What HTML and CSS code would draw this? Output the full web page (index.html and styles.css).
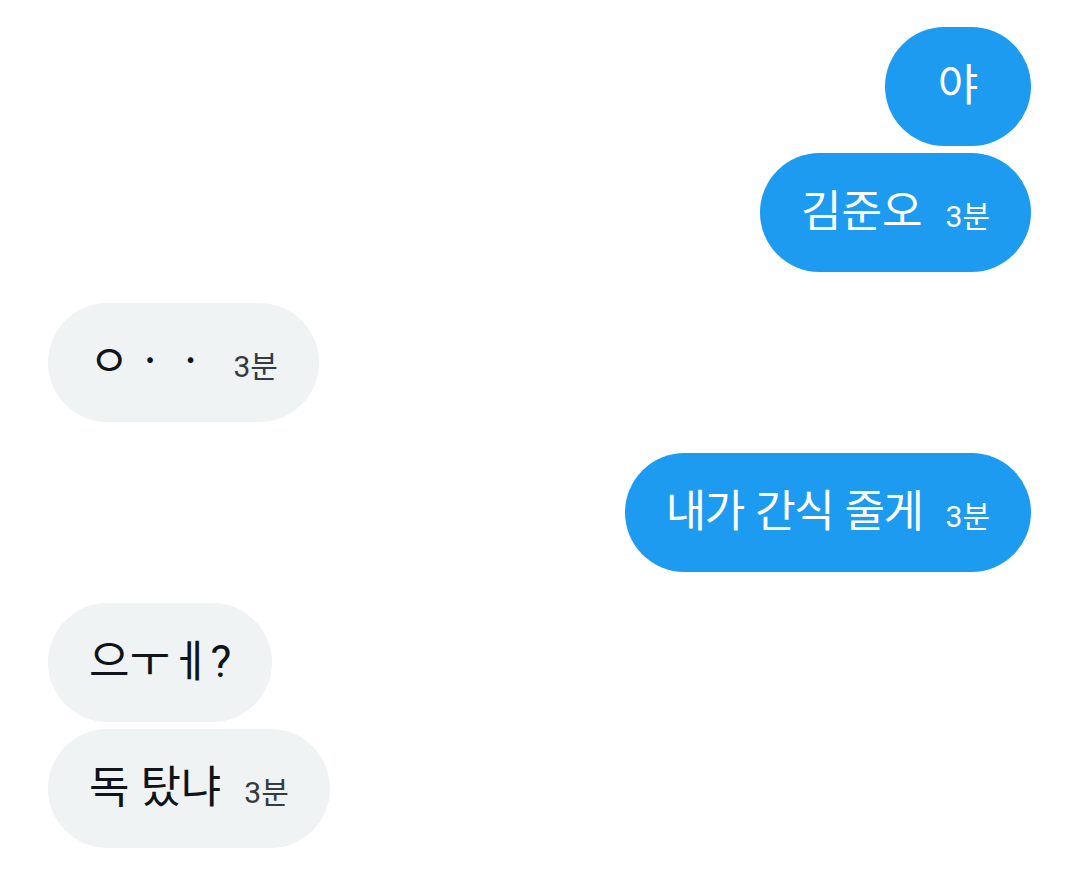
FILE: index.html
```html
<!DOCTYPE html>
<html lang="ko">
<head>
<meta charset="utf-8">
<title>Messages</title>
<link rel="stylesheet" href="styles.css">
</head>
<body>
<div class="thread">
  <div class="group group--sent">
    <div class="bubble bubble--sent bubble--single"><span class="text">야</span></div>
    <div class="bubble bubble--sent"><span class="text">김준오</span><span class="time">3분</span></div>
  </div>
  <div class="group group--received">
    <div class="bubble bubble--received"><span class="text">ㅇㆍㆍ</span><span class="time">3분</span></div>
  </div>
  <div class="group group--sent">
    <div class="bubble bubble--sent"><span class="text text--narrow">내가 간식 줄게</span><span class="time">3분</span></div>
  </div>
  <div class="group group--received">
    <div class="bubble bubble--received"><span class="text">으ㅜㅔ?</span></div>
    <div class="bubble bubble--received"><span class="text">독 탔냐</span><span class="time">3분</span></div>
  </div>
</div>
</body>
</html>
```

FILE: styles.css
```css
html, body {
  margin: 0;
  padding: 0;
  background: #ffffff;
}

body {
  font-family: Roboto, "Noto Sans CJK KR", sans-serif;
  color: #0f1419;
}

.thread {
  display: flex;
  flex-direction: column;
  gap: 31px;
  padding: 27px 49px 0 48px;
}

.group {
  display: flex;
  flex-direction: column;
  gap: 7px;
}

.group--sent {
  align-items: flex-end;
}

.group--received {
  align-items: flex-start;
}

.bubble {
  display: flex;
  align-items: baseline;
  justify-content: center;
  gap: 23px;
  box-sizing: border-box;
  height: 119px;
  padding: 34px 41px;
  border-radius: 60px;
  line-height: 51px;
  white-space: nowrap;
}

.bubble--sent {
  background: #1d9bf0;
  color: #ffffff;
}

.bubble--received {
  background: #eff3f4;
  color: #0f1419;
}

.bubble--single {
  min-width: 146px;
}

.text {
  font-size: 44px;
  font-weight: 400;
}

.text--narrow {
  letter-spacing: -1.5px;
  word-spacing: 2px;
}

.time {
  font-size: 30px;
}

.bubble--received .time {
  color: #333a40;
}
```
